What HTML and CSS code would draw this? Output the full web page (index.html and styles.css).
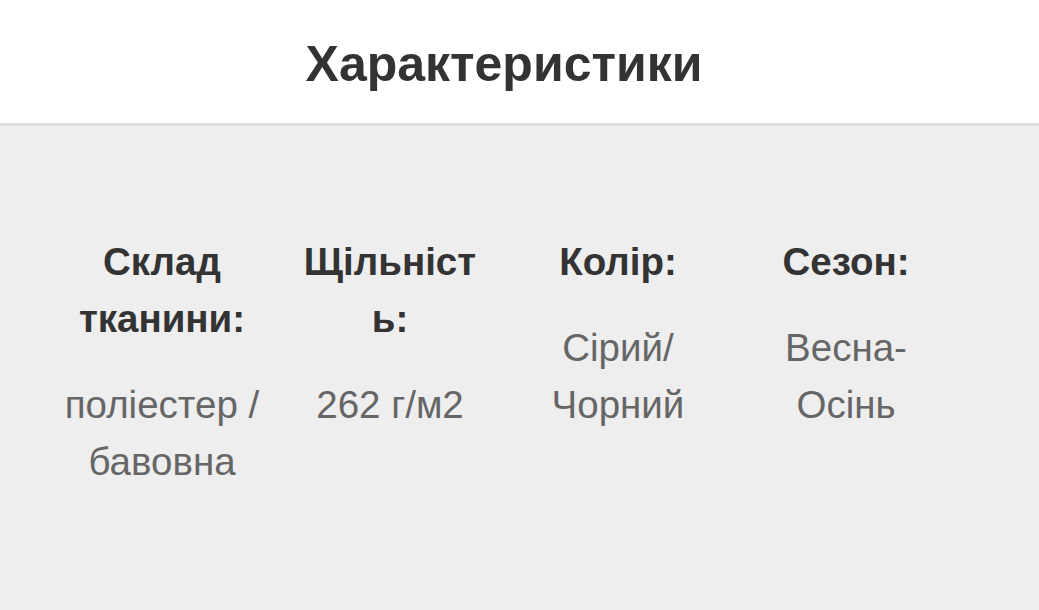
FILE: index.html
```html
<!DOCTYPE html>
<html lang="uk">
<head>
<meta charset="utf-8">
<title>Характеристики</title>
<link rel="stylesheet" href="styles.css">
</head>
<body>
<header class="head">
  <div class="wrap">
    <h2 class="title">Характеристики</h2>
  </div>
</header>
<section class="specs">
  <div class="wrap grid">
    <div class="item">
      <div class="label">Склад тканини:</div>
      <div class="value">поліестер / бавовна</div>
    </div>
    <div class="item">
      <div class="label">Щільніст<wbr>ь:</div>
      <div class="value">262 г/м2</div>
    </div>
    <div class="item">
      <div class="label">Колір:</div>
      <div class="value">Сірий/ Чорний</div>
    </div>
    <div class="item">
      <div class="label">Сезон:</div>
      <div class="value">Весна-Осінь</div>
    </div>
  </div>
</section>
</body>
</html>
```

FILE: styles.css
```css
html, body {
  margin: 0;
  padding: 0;
  height: 100%;
}
body {
  font-family: "Liberation Sans", Arial, Helvetica, sans-serif;
  background: #eeeeee;
  overflow: hidden;
}
.wrap {
  width: 912px;
  margin-left: 48px;
}
.head {
  background: #ffffff;
  border-bottom: 3px solid #dddddd;
  height: 123px;
}
.title {
  margin: 0;
  padding-top: 32px;
  text-align: center;
  font-size: 50px;
  line-height: 64px;
  font-weight: 700;
  color: #333333;
}
.specs {
  background: #eeeeee;
  padding-top: 107px;
}
.grid {
  display: grid;
  grid-template-columns: repeat(4, 228px);
}
.item {
  padding: 0 14px;
  text-align: center;
  overflow-wrap: break-word;
}
.label {
  font-size: 38.5px;
  line-height: 57px;
  font-weight: 700;
  color: #333333;
}
.value {
  margin-top: 29px;
  font-size: 38.5px;
  line-height: 57px;
  color: #666666;
}
```
